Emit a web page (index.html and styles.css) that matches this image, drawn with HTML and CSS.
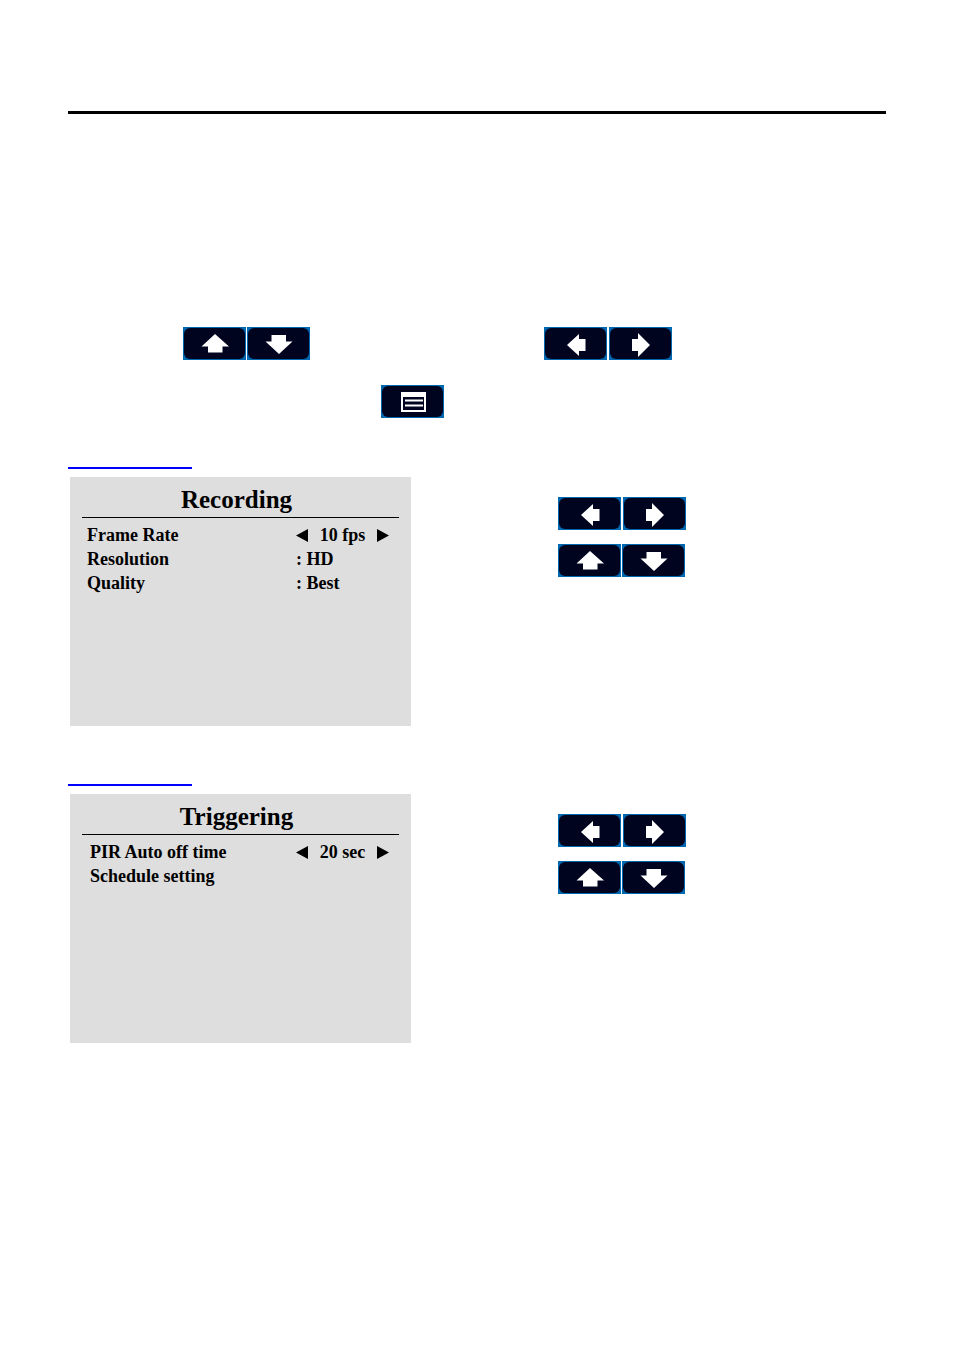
FILE: index.html
```
<!DOCTYPE html>
<html lang="en">
<head>
  <meta charset="UTF-8">
  <meta name="viewport" content="width=device-width, initial-scale=1.0">
  <title>Recording and Triggering</title>
  <link rel="stylesheet" href="styles.css">
</head>
<body>
  <!-- shared icons -->
  <svg class="icons" aria-hidden="true">
    <symbol id="up" viewBox="1 1 61 31">
      <path d="M32 7L46 19.500H39.500V25.500H25V19.500H18.500Z"/>
    </symbol>
    <symbol id="down" viewBox="1 1 61 31">
      <path d="M24.500 8H39V14.500H45.500L32 27L18.500 14.500H24.500Z"/>
    </symbol>
    <symbol id="left" viewBox="1 1 61 31">
      <path d="M23 18L35 7V12H41.500V24H35V29Z"/>
    </symbol>
    <symbol id="right" viewBox="1 1 61 31">
      <path d="M41 18L29 6V12H23V24H29V30Z"/>
    </symbol>
    <symbol id="menu" viewBox="1 1 61 31">
      <path fill-rule="evenodd" d="M20 7H45V27H20ZM22 12V25H43V12Z"/>
      <path d="M24 14.500H42V16.500H24ZM24 19.500H42V21.500H24Z"/>
    </symbol>
    <symbol id="previous" viewBox="0 0 12 13">
      <path d="M0 6.500L12 0V13Z"/>
    </symbol>
    <symbol id="next" viewBox="0 0 12 13">
      <path d="M0 0L12 6.500L0 13Z"/>
    </symbol>
  </svg>

  <main class="page">
    <hr class="rule">

    <div class="keys-row">
      <div class="keys">
        <button class="key" aria-label="Up"><svg><use href="#up"/></svg></button>
        <button class="key" aria-label="Down"><svg><use href="#down"/></svg></button>
      </div>
      <div class="keys keys-wide">
        <button class="key" aria-label="Left"><svg><use href="#left"/></svg></button>
        <button class="key" aria-label="Right"><svg><use href="#right"/></svg></button>
      </div>
    </div>
    <div class="menu-row">
      <button class="key" aria-label="Menu"><svg><use href="#menu"/></svg></button>
    </div>

    <section class="section">
      <div class="underline"></div>
      <div class="content">
        <div class="panel">
          <h2>Recording</h2>
          <dl class="settings">
            <dt>Frame Rate</dt>
            <dd class="stepper">
              <button aria-label="Previous frame rate"><svg><use href="#previous"/></svg></button>
              <span>10 fps</span>
              <button aria-label="Next frame rate"><svg><use href="#next"/></svg></button>
            </dd>
            <dt>Resolution</dt>
            <dd>: HD</dd>
            <dt>Quality</dt>
            <dd>: Best</dd>
          </dl>
        </div>
        <div class="help">
          <div class="keys keys-wide">
            <button class="key" aria-label="Left"><svg><use href="#left"/></svg></button>
            <button class="key" aria-label="Right"><svg><use href="#right"/></svg></button>
          </div>
          <div class="keys">
            <button class="key" aria-label="Up"><svg><use href="#up"/></svg></button>
            <button class="key" aria-label="Down"><svg><use href="#down"/></svg></button>
          </div>
        </div>
      </div>
    </section>

    <section class="section">
      <div class="underline"></div>
      <div class="content">
        <div class="panel">
          <h2>Triggering</h2>
          <dl class="settings settings-indent">
            <dt>PIR Auto off time</dt>
            <dd class="stepper">
              <button aria-label="Previous off time"><svg><use href="#previous"/></svg></button>
              <span>20 sec</span>
              <button aria-label="Next off time"><svg><use href="#next"/></svg></button>
            </dd>
            <dt>Schedule setting</dt>
          </dl>
        </div>
        <div class="help">
          <div class="keys keys-wide">
            <button class="key" aria-label="Left"><svg><use href="#left"/></svg></button>
            <button class="key" aria-label="Right"><svg><use href="#right"/></svg></button>
          </div>
          <div class="keys">
            <button class="key" aria-label="Up"><svg><use href="#up"/></svg></button>
            <button class="key" aria-label="Down"><svg><use href="#down"/></svg></button>
          </div>
        </div>
      </div>
    </section>
  </main>
</body>
</html>
```
FILE: styles.css
```
* {
  box-sizing: border-box;
}

body {
  margin: 0;
  background: #fff;
  color: #000;
  font-family: "Liberation Serif", "Times New Roman", serif;
}

button {
  padding: 0;
  border: none;
  background: none;
  cursor: pointer;
}

.icons {
  display: none;
}

.page {
  padding: 111px 68px 60px;
}

.rule {
  height: 3px;
  margin: 0;
  border: none;
  background: #000;
}

/* navigation keys */
.keys {
  display: flex;
  gap: 1px;
}

.keys-wide {
  gap: 2px;
}

.key {
  display: block;
  width: 63px;
  height: 33px;
  padding: 1px;
  background: #0067b1;
}

.key svg {
  display: block;
  width: 61px;
  height: 31px;
  border-radius: 6px;
  background: #00041f;
  fill: #fff;
}

.keys-row {
  display: flex;
  gap: 234px;
  margin-top: 213px;
  padding-left: 115px;
}

.menu-row {
  margin-top: 25px;
  padding-left: 313px;
}

.section {
  margin-top: 49px;
}

.section + .section {
  margin-top: 58px;
}

.underline {
  width: 124px;
  height: 2px;
  background: #00f;
}

.content {
  display: flex;
  gap: 147px;
  padding: 8px 0 0 2px;
}

/* settings screen */
.panel {
  flex: 0 1 341px;
  min-height: 249px;
  padding: 7px 12px;
  background: #dedede;
}

.panel h2 {
  margin: 0;
  padding: 0 8px 1px 0;
  border-bottom: 1px solid #000;
  font-size: 25px;
  line-height: 32px;
  text-align: center;
}

.settings {
  display: grid;
  grid-template-columns: 1fr 98px;
  grid-auto-rows: 24px;
  margin: 5px 5px 0;
  font-size: 18px;
  font-weight: bold;
  line-height: 24px;
}

.settings-indent {
  padding-left: 3px;
}

.settings dd {
  margin: 0;
}

.settings .stepper {
  display: flex;
  align-items: center;
  justify-content: space-between;
  padding-right: 5px;
}

.stepper svg {
  display: block;
  width: 12px;
  height: 13px;
}

.help {
  display: flex;
  flex-direction: column;
  gap: 14px;
  padding-top: 20px;
}
```
